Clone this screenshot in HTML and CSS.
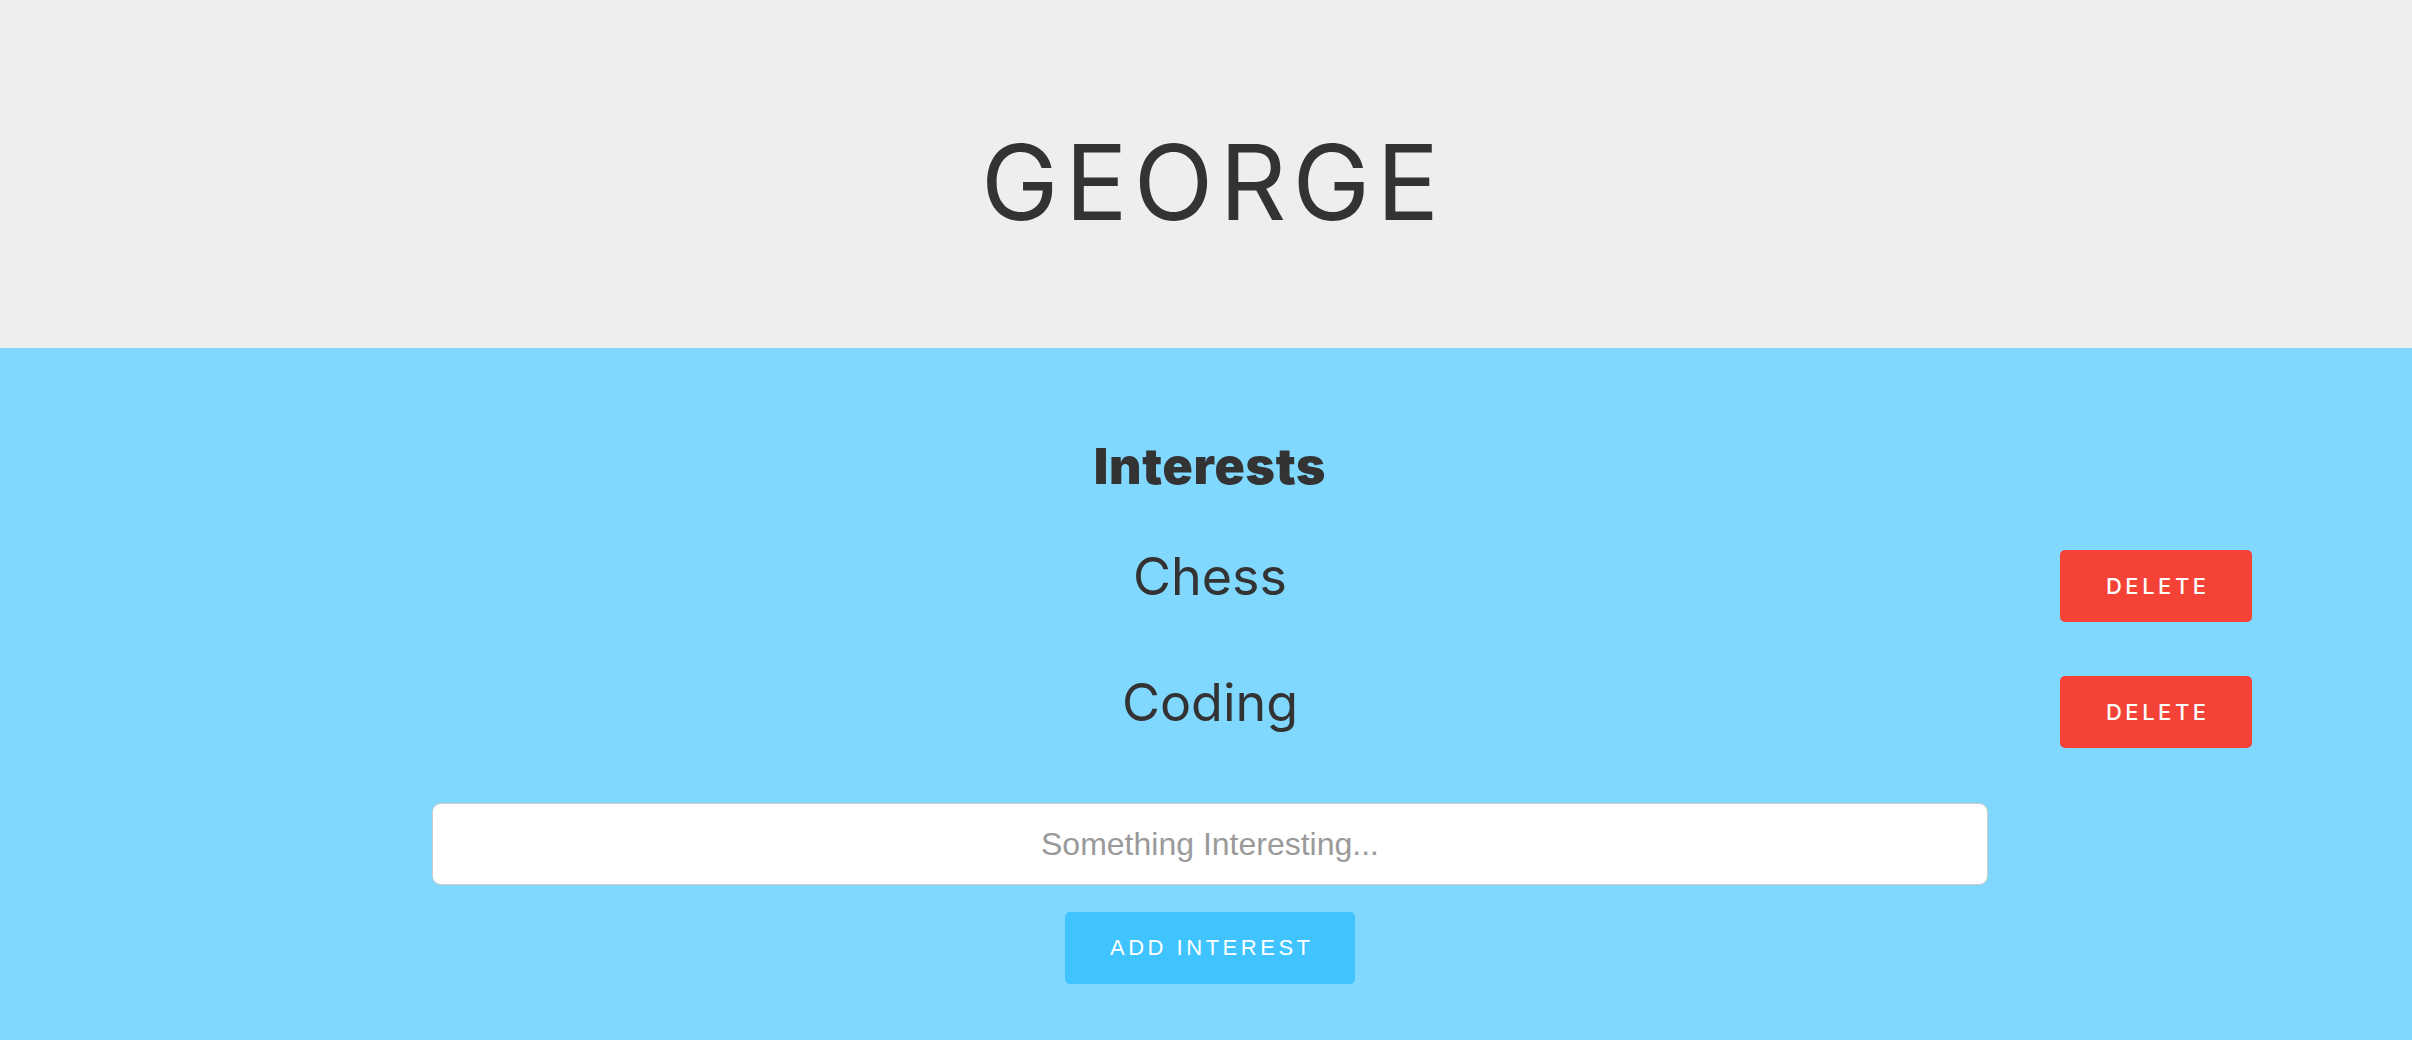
FILE: index.html
```html
<!DOCTYPE html>
<html lang="en">
<head>
<meta charset="utf-8">
<title>George</title>
<link rel="stylesheet" href="styles.css">
</head>
<body>
<div class="page">
  <header class="hero">
    <h1 class="name">GEORGE</h1>
  </header>
  <main class="interests">
    <h2 class="title">Interests</h2>
    <ul class="list">
      <li class="row">
        <span class="spacer"></span>
        <span class="label">Chess</span>
        <span class="actions"><button class="btn btn-delete">DELETE</button></span>
      </li>
      <li class="row">
        <span class="spacer"></span>
        <span class="label">Coding</span>
        <span class="actions"><button class="btn btn-delete">DELETE</button></span>
      </li>
    </ul>
    <form class="add-form">
      <input class="field" type="text" placeholder="Something Interesting...">
      <button class="btn btn-add" type="button">ADD INTEREST</button>
    </form>
  </main>
</div>
</body>
</html>
```
FILE: styles.css
```css
* { box-sizing: border-box; }
html, body { margin: 0; padding: 0; }
body {
  background: #80d8ff;
  color: #333333;
  font-family: "Inter", "Liberation Sans", sans-serif;
  height: 1040px;
  overflow: hidden;
}
.page {
  padding-left: 8px;
  min-height: 1040px;
  background: #80d8ff;
}
.hero {
  margin-left: -8px;
  padding-left: 8px;
  background: #eeeeee;
  height: 348px;
  padding-top: 130px;
}
.name {
  margin: 0;
  text-align: center;
  font-size: 104px;
  line-height: 1;
  font-weight: 400;
  letter-spacing: 0.06em;
  text-indent: 0.06em;
}
.interests {
  padding-top: 93px;
  display: flex;
  flex-direction: column;
  align-items: center;
}
.title {
  margin: 0;
  font-size: 50px;
  line-height: 1;
  font-weight: 900;
  letter-spacing: 0.015em;
}
.list {
  list-style: none;
  margin: 59px 0 0;
  padding: 0 160px;
  width: 100%;
  display: flex;
  flex-direction: column;
  gap: 54px;
}
.row {
  display: grid;
  grid-template-columns: 1fr auto 1fr;
  align-items: start;
  height: 72px;
}
.label {
  font-size: 52px;
  line-height: 1;
  font-weight: 400;
  padding-top: 1px;
}
.actions {
  display: flex;
  justify-content: flex-end;
}
.btn {
  border: none;
  border-radius: 5px;
  color: #ffffff;
  height: 72px;
  cursor: pointer;
  padding: 0;
}
.btn-delete {
  width: 192px;
  background: #f44336;
  font-family: "Inter", sans-serif;
  font-size: 22px;
  font-weight: 500;
  letter-spacing: 0.16em;
  text-indent: 0.16em;
}
.add-form {
  margin-top: 55px;
  display: flex;
  flex-direction: column;
  align-items: center;
  gap: 27px;
}
.field {
  width: 1556px;
  height: 82px;
  border: 1px solid #cccccc;
  border-radius: 9px;
  background: #ffffff;
  text-align: center;
  font-family: "Liberation Sans", Arial, sans-serif;
  font-size: 32px;
  color: #333333;
  outline: none;
}
.field::placeholder { color: #9a9a9a; }
.btn-add {
  width: 290px;
  background: #40c4ff;
  font-family: "Liberation Sans", Arial, sans-serif;
  font-size: 22px;
  letter-spacing: 0.16em;
  text-indent: 0.16em;
}
```
